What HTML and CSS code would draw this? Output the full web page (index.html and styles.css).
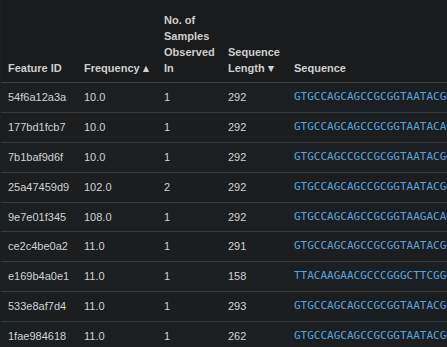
FILE: index.html
```html
<!DOCTYPE html>
<html>
<head>
<meta charset="utf-8">
<link rel="stylesheet" href="styles.css">
</head>
<body>
<table class="features">
<colgroup>
<col class="c-id"><col class="c-freq"><col class="c-samp"><col class="c-len"><col class="c-seq">
</colgroup>
<thead>
<tr>
<th>Feature ID</th>
<th>Frequency<span class="arrow">▲</span></th>
<th>No. of<br>Samples<br>Observed<br>In</th>
<th>Sequence<br>Length<span class="arrow">▼</span></th>
<th>Sequence</th>
</tr>
</thead>
<tbody>
<tr><td>54f6a12a3a</td><td>10.0</td><td>1</td><td>292</td><td class="seq">GTGCCAGCAGCCGCGGTAATACGGAGGGTGCAAGCGTTAATCGGAATTACTGGGCGTAAAG</td></tr>
<tr><td>177bd1fcb7</td><td>10.0</td><td>1</td><td>292</td><td class="seq">GTGCCAGCAGCCGCGGTAATACAGAGGGTGCAAGCGTTAATCGGAATTACTGGGCGTAAAG</td></tr>
<tr><td>7b1baf9d6f</td><td>10.0</td><td>1</td><td>292</td><td class="seq">GTGCCAGCCGCCGCGGTAATACGGAGGGTGCAAGCGTTAATCGGAATTACTGGGCGTAAAG</td></tr>
<tr><td>25a47459d9</td><td>102.0</td><td>2</td><td>292</td><td class="seq">GTGCCAGCAGCCGCGGTAATACGGAGGGTGCAAGCGTTAATCGGAATTACTGGGCGTAAAG</td></tr>
<tr><td>9e7e01f345</td><td>108.0</td><td>1</td><td>292</td><td class="seq">GTGCCAGCAGCCGCGGTAAGACAGAGGGTGCAAGCGTTAATCGGAATTACTGGGCGTAAAG</td></tr>
<tr><td>ce2c4be0a2</td><td>11.0</td><td>1</td><td>291</td><td class="seq">GTGCCAGCAGCCGCGGTAATACGGAGGGTGCAAGCGTTAATCGGAATTACTGGGCGTAAAG</td></tr>
<tr><td>e169b4a0e1</td><td>11.0</td><td>1</td><td>158</td><td class="seq">TTACAAGAACGCCCGGGCTTCGGGAGGGTGCAAGCGTTAATCGGAATTACTGGGCGTAAAG</td></tr>
<tr><td>533e8af7d4</td><td>11.0</td><td>1</td><td>293</td><td class="seq">GTGCCAGCAGCCGCGGTAATACGGAGGGTGCAAGCGTTAATCGGAATTACTGGGCGTAAAG</td></tr>
<tr><td>1fae984618</td><td>11.0</td><td>1</td><td>262</td><td class="seq">GTGCCAGCAGCCGCGGTAATACGGAGGGTGCAAGCGTTAATCGGAATTACTGGGCGTAAAG</td></tr>
</tbody>
</table>
</body>
</html>
```

FILE: styles.css
```css
html, body {
  margin: 0;
  padding: 0;
  background: #1c1e20;
  overflow: hidden;
  width: 447px;
  height: 347px;
}
body {
  font-family: "Liberation Sans", Arial, sans-serif;
  font-size: 11px;
  color: #d2d2d2;
}
.features {
  border-collapse: collapse;
  table-layout: fixed;
  width: 760px;
  margin-left: 1px;
}
.c-id { width: 76px; }
.c-freq { width: 80px; }
.c-samp { width: 64px; }
.c-len { width: 66px; }
.c-seq { width: 474px; }
.features th {
  text-align: left;
  vertical-align: bottom;
  font-weight: bold;
  color: #cfcfcf;
  line-height: 16px;
  padding: 12px 8px 6px 7px;
  background: #1a1b1d;
  border-bottom: 1px solid #3b3d40;
  white-space: nowrap;
}
.arrow {
  font-size: 10.5px;
  margin-left: 1px;
}
.features td {
  line-height: 16.875px;
  padding: 6px 8px 6px 7px;
  border-bottom: 1px solid #37393c;
  white-space: nowrap;
  overflow: hidden;
  vertical-align: middle;
}
.features tbody tr:nth-child(odd) { background: #1c1f21; }
.features tbody tr:nth-child(even) { background: #1b1d1f; }
.features td.seq {
  font-family: "DejaVu Sans Mono", monospace;
  font-size: 11px;
  color: #5aa2dc;
}
```
